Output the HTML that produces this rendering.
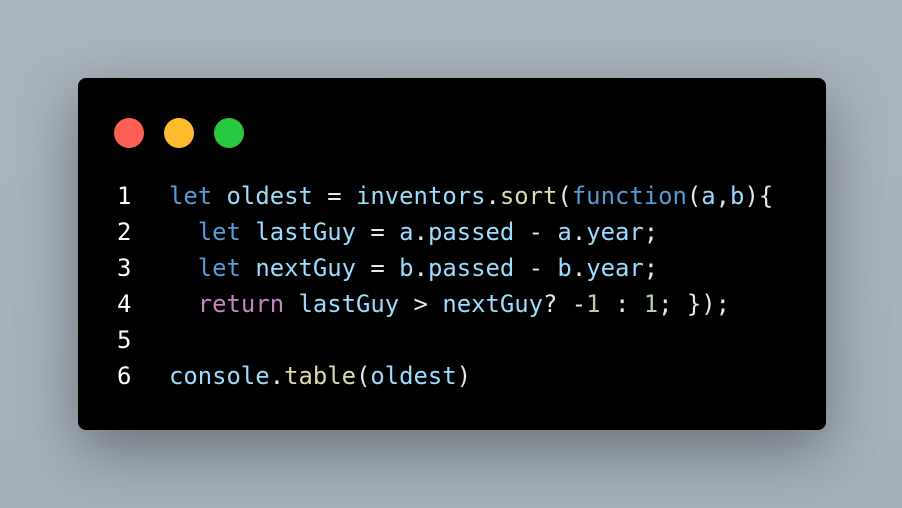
<!DOCTYPE html>
<html><head><style>
html,body{margin:0;padding:0;width:902px;height:508px;overflow:hidden;background:linear-gradient(180deg,#a9b4be,#a4b0bb);}
.card{position:absolute;left:78px;top:78px;width:748px;height:352px;background:#000;border-radius:8px;box-shadow:0 20px 60px rgba(0,0,0,.35);}
.dot{position:absolute;top:40px;width:30px;height:30px;border-radius:50%;}
.code{position:absolute;left:-1px;top:100px;font-family:"DejaVu Sans Mono","Liberation Mono",monospace;font-size:23.9px;line-height:36px;color:#e8e8e8;white-space:pre;}
.ln{display:inline-block;width:92px;text-align:left;padding-left:40px;box-sizing:border-box;color:#fff;}
.k{color:#569cd6}.v{color:#9cdcfe}.f{color:#dcdcaa}.r{color:#c586c0}.n{color:#b5cea8}
</style></head><body>
<div class="card">
<div class="dot" style="left:36px;background:#ff5f57"></div>
<div class="dot" style="left:86px;background:#febc2e"></div>
<div class="dot" style="left:136px;background:#28c840"></div>
<div class="code"><span class="ln">1</span><span class="k">let</span> <span class="v">oldest</span> = <span class="v">inventors</span>.<span class="f">sort</span>(<span class="k">function</span>(<span class="v">a</span>,<span class="v">b</span>){
<span class="ln">2</span>  <span class="k">let</span> <span class="v">lastGuy</span> = <span class="v">a</span>.<span class="v">passed</span> - <span class="v">a</span>.<span class="v">year</span>;
<span class="ln">3</span>  <span class="k">let</span> <span class="v">nextGuy</span> = <span class="v">b</span>.<span class="v">passed</span> - <span class="v">b</span>.<span class="v">year</span>;
<span class="ln">4</span>  <span class="r">return</span> <span class="v">lastGuy</span> &gt; <span class="v">nextGuy</span>? -<span class="n">1</span> : <span class="n">1</span>; });
<span class="ln">5</span>
<span class="ln">6</span><span class="v">console</span>.<span class="f">table</span>(<span class="v">oldest</span>)</div>
</div>
</body></html>
